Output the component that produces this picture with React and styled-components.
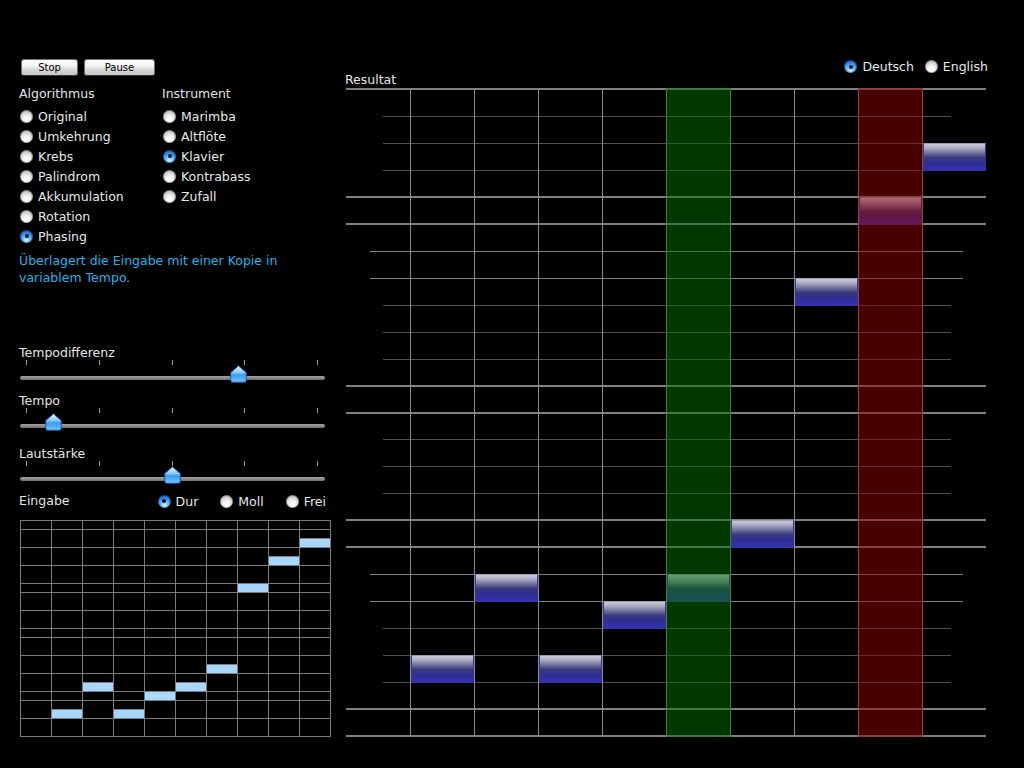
import React from "react";
import styled, { createGlobalStyle } from "styled-components";

const GlobalStyle = createGlobalStyle`
  html, body { margin: 0; padding: 0; background: #000; }
  body { font-family: "DejaVu Sans", Verdana, sans-serif; color: #e6e6e6; }
`;

const melody = [null, 21, 18, 21, 19, 18, 16, 7, 4, 2];

const resultLines = [
  "thick", "short", "short", "short", "thick", "thick", "long", "long", "short", "short",
  "short", "thick", "thick", "short", "short", "short", "thick", "thick", "long", "long",
  "short", "short", "short", "thick", "thick",
];

const inputLines = [0, 1, 3, 5, 7, 8, 10, 12, 13, 15, 17, 19, 20, 22, 24];

const Screen = styled.div`
  width: 1024px;
  height: 768px;
  display: flex;
  background: #000;
  overflow: hidden;
`;

const LeftPanel = styled.div`
  width: 312px;
  margin-left: 19px;
  padding-top: 59px;
  display: flex;
  flex-direction: column;
`;

const ButtonRow = styled.div`
  display: flex;
  gap: 6px;
  margin-left: 2px;
  height: 17px;
`;

const AquaButton = styled.button`
  width: ${(p) => p.$w}px;
  height: 17px;
  padding: 0;
  font: 10px "DejaVu Sans", Verdana, sans-serif;
  color: #000;
  border: 1px solid #707070;
  border-bottom-color: #3a3a3a;
  border-radius: 3px;
  background: linear-gradient(#fefefe 0%, #f3f3f3 40%, #dadada 60%, #c6c6c6 100%);
`;

const OptionsGrid = styled.div`
  display: grid;
  grid-template-columns: 143px 1fr;
  margin-top: 10px;
`;

const OptionColumn = styled.div`
  display: flex;
  flex-direction: column;
`;

const Heading = styled.div`
  font-size: 12.5px;
  line-height: 16px;
  margin-bottom: 4px;
  color: #e4e4e4;
`;

const RadioRow = styled.label`
  display: flex;
  align-items: center;
  gap: ${(p) => p.$gap || 5}px;
  height: ${(p) => p.$h || 20}px;
  margin-left: 1px;
  font-size: 12.5px;
  color: #e8e8e8;
  white-space: nowrap;
`;

const RadioDot = styled.span`
  width: 13px;
  height: 13px;
  border-radius: 50%;
  flex: none;
  display: flex;
  align-items: center;
  justify-content: center;
  background: ${(p) =>
    p.$on
      ? "radial-gradient(circle at 50% 78%, #d6f1ff 0%, #6cc0fa 30%, #2a84e0 62%, #0b3f96 100%)"
      : "radial-gradient(circle at 50% 74%, #ffffff 0%, #f2f2f2 32%, #c9c9c9 70%, #8c8c8c 100%)"};
  box-shadow: inset 0 0 0 1px rgba(0, 0, 0, 0.3);
  &::after {
    content: "";
    display: ${(p) => (p.$on ? "block" : "none")};
    width: 4px;
    height: 4px;
    border-radius: 50%;
    background: #04122a;
  }
`;

const Description = styled.p`
  margin: 6px 0 0;
  font-size: 12.5px;
  line-height: 17px;
  color: #20b4e8;
`;

const SliderBlock = styled.div`
  margin-top: ${(p) => p.$top}px;
  display: flex;
  flex-direction: column;
`;

const SliderLabel = styled.div`
  font-size: 12.5px;
  line-height: 16px;
  color: #e6e6e6;
`;

const Rail = styled.div`
  position: relative;
  margin-top: -1px;
  width: 305px;
  margin-left: 1px;
  display: flex;
  flex-direction: column;
`;

const TickRow = styled.div`
  display: flex;
  justify-content: space-between;
  padding: 0 7px 0 6px;
  height: 5px;
`;

const Tick = styled.span`
  width: 1px;
  height: 5px;
  background: #9a9a9a;
`;

const Track = styled.div`
  margin-top: 11px;
  height: 4px;
  border-radius: 2px;
  background: linear-gradient(#a4a4a4, #868686 60%, #6e6e6e);
`;

const ThumbWrap = styled.div`
  position: absolute;
  top: 5px;
  width: 17px;
  height: 18px;
  line-height: 0;
`;

const EingabeRow = styled.div`
  display: flex;
  align-items: center;
  height: 16px;
  margin-top: 12px;
  width: 307px;
`;

const EingabeOptions = styled.div`
  display: flex;
  gap: 21px;
  margin-left: auto;
`;

const InputGrid = styled.div`
  display: grid;
  margin-top: 11px;
  margin-left: 1px;
  width: 311px;
  grid-template-columns: repeat(10, 31px) 1px;
  grid-template-rows: repeat(24, 9px) 1px;
`;

const InputHLine = styled.div`
  grid-column: 1 / -1;
  grid-row: ${(p) => p.$row};
  align-self: start;
  height: 1px;
  background: #7c7c7c;
  z-index: 1;
`;

const InputVLine = styled.div`
  grid-column: ${(p) => p.$col};
  grid-row: 1 / -1;
  justify-self: start;
  width: 1px;
  background: #7c7c7c;
  z-index: 1;
`;

const InputNote = styled.div`
  grid-column: ${(p) => p.$col};
  grid-row: ${(p) => p.$row};
  margin-left: 1px;
  background: #a8d7fe;
  border-top: 1px solid #808080;
`;

const RightPanel = styled.div`
  width: 643px;
  margin-left: 14px;
  padding-top: 60px;
  display: flex;
  flex-direction: column;
`;

const LangRow = styled.div`
  display: flex;
  justify-content: flex-end;
  gap: 10px;
  height: 12px;
`;

const ResultLabel = styled.div`
  font-size: 12.5px;
  line-height: 14px;
  height: 14px;
  padding-top: 1px;
`;

const ResultGrid = styled.div`
  display: grid;
  margin-top: 2px;
  margin-left: 1px;
  width: 640px;
  height: 647px;
  grid-template-columns: repeat(10, 64px);
  grid-template-rows: repeat(24, 1fr) 0;
`;

const lineStyles = {
  thick: { h: 2, color: "#808080", l: 0, r: 0, top: -1 },
  long: { h: 1, color: "#7e7e7e", l: 24, r: 23, top: 0 },
  short: { h: 1, color: "#505050", l: 37, r: 35, top: 0 },
};

const StaffLine = styled.div`
  grid-column: 1 / -1;
  grid-row: ${(p) => p.$row};
  align-self: start;
  height: ${(p) => lineStyles[p.$kind].h}px;
  margin: ${(p) => lineStyles[p.$kind].top}px ${(p) => lineStyles[p.$kind].r}px 0
    ${(p) => lineStyles[p.$kind].l}px;
  background: ${(p) => lineStyles[p.$kind].color};
`;

const BeatLine = styled.div`
  grid-column: ${(p) => p.$col};
  grid-row: 1 / 25;
  justify-self: start;
  width: 1px;
  background: #8a8a8a;
`;

const ResultNote = styled.div`
  grid-column: ${(p) => p.$col};
  grid-row: ${(p) => p.$row};
  margin: 0 0 -1px 1px;
  z-index: 1;
  box-sizing: border-box;
  border: 1px solid #34349a;
  border-top-color: #9a9ab8;
  background: linear-gradient(
    #cacadb 0%,
    #a9a9c2 16%,
    #6c6c9a 36%,
    #3a3a7a 52%,
    #2e2e92 72%,
    #3232b4 100%
  );
`;

const Highlight = styled.div`
  grid-column: ${(p) => p.$col};
  grid-row: 1 / 25;
  margin: -1px -1px -1px 0;
  z-index: 2;
  background: ${(p) => (p.$tone === "green" ? "rgba(0, 112, 0, 0.5)" : "rgba(146, 0, 0, 0.5)")};
`;

function Radio({ label, on, gap, h }) {
  return (
    <RadioRow $gap={gap} $h={h}>
      <RadioDot $on={on} />
      {label}
    </RadioRow>
  );
}

function Thumb() {
  return (
    <svg width="17" height="18" viewBox="0 0 17 18">
      <defs>
        <linearGradient id="thumbFill" x1="0" y1="0" x2="0" y2="1">
          <stop offset="0" stopColor="#e4f4ff" />
          <stop offset="0.4" stopColor="#8ccbfb" />
          <stop offset="0.55" stopColor="#3f9cf0" />
          <stop offset="1" stopColor="#72c2ff" />
        </linearGradient>
      </defs>
      <path
        d="M8.5 0.8 L16.3 7.6 V15.3 Q16.3 17.3 14.3 17.3 H2.7 Q0.7 17.3 0.7 15.3 V7.6 Z"
        fill="url(#thumbFill)"
        stroke="#1d4f9e"
        strokeWidth="1"
      />
    </svg>
  );
}

function Slider({ label, value, top }) {
  const left = 6.7 + value * 290.6 - 8.5;
  return (
    <SliderBlock $top={top}>
      <SliderLabel>{label}</SliderLabel>
      <Rail>
        <TickRow>
          {[0, 1, 2, 3, 4].map((i) => (
            <Tick key={i} />
          ))}
        </TickRow>
        <Track />
        <ThumbWrap style={{ left: `${left}px` }}>
          <Thumb />
        </ThumbWrap>
      </Rail>
    </SliderBlock>
  );
}

const algorithms = ["Original", "Umkehrung", "Krebs", "Palindrom", "Akkumulation", "Rotation", "Phasing"];
const instruments = ["Marimba", "Altflöte", "Klavier", "Kontrabass", "Zufall"];

export default function App() {
  return (
    <Screen>
      <GlobalStyle />
      <LeftPanel>
        <ButtonRow>
          <AquaButton $w={57}>Stop</AquaButton>
          <AquaButton $w={71}>Pause</AquaButton>
        </ButtonRow>

        <OptionsGrid>
          <OptionColumn>
            <Heading>Algorithmus</Heading>
            {algorithms.map((a) => (
              <Radio key={a} label={a} on={a === "Phasing"} />
            ))}
          </OptionColumn>
          <OptionColumn>
            <Heading>Instrument</Heading>
            {instruments.map((a) => (
              <Radio key={a} label={a} on={a === "Klavier"} />
            ))}
          </OptionColumn>
        </OptionsGrid>

        <Description>
          Überlagert die Eingabe mit einer Kopie in
          <br />
          variablem Tempo.
        </Description>

        <Slider label="Tempodifferenz" value={0.728} top={59} />
        <Slider label="Tempo" value={0.093} top={13} />
        <Slider label="Lautstärke" value={0.5} top={18} />

        <EingabeRow>
          <SliderLabel>Eingabe</SliderLabel>
          <EingabeOptions>
            <Radio label="Dur" on h={16} />
            <Radio label="Moll" h={16} />
            <Radio label="Frei" h={16} />
          </EingabeOptions>
        </EingabeRow>

        <InputGrid>
          {inputLines.map((r) => (
            <InputHLine key={"h" + r} $row={r + 1} />
          ))}
          {Array.from({ length: 11 }, (_, c) => (
            <InputVLine key={"v" + c} $col={c + 1} />
          ))}
          {melody.map((r, c) =>
            r === null ? null : <InputNote key={"n" + c} $col={c + 1} $row={r + 1} />
          )}
        </InputGrid>
      </LeftPanel>

      <RightPanel>
        <LangRow>
          <Radio label="Deutsch" on h={13} />
          <Radio label="English" h={13} />
        </LangRow>
        <ResultLabel>Resultat</ResultLabel>
        <ResultGrid>
          {resultLines.map((kind, i) => (
            <StaffLine key={"s" + i} $row={i + 1} $kind={kind} />
          ))}
          {Array.from({ length: 9 }, (_, c) => (
            <BeatLine key={"b" + c} $col={c + 2} />
          ))}
          {melody.map((r, c) =>
            r === null ? null : <ResultNote key={"r" + c} $col={c + 1} $row={r + 1} />
          )}
          <Highlight $col={6} $tone="green" />
          <Highlight $col={9} $tone="red" />
        </ResultGrid>
      </RightPanel>
    </Screen>
  );
}
